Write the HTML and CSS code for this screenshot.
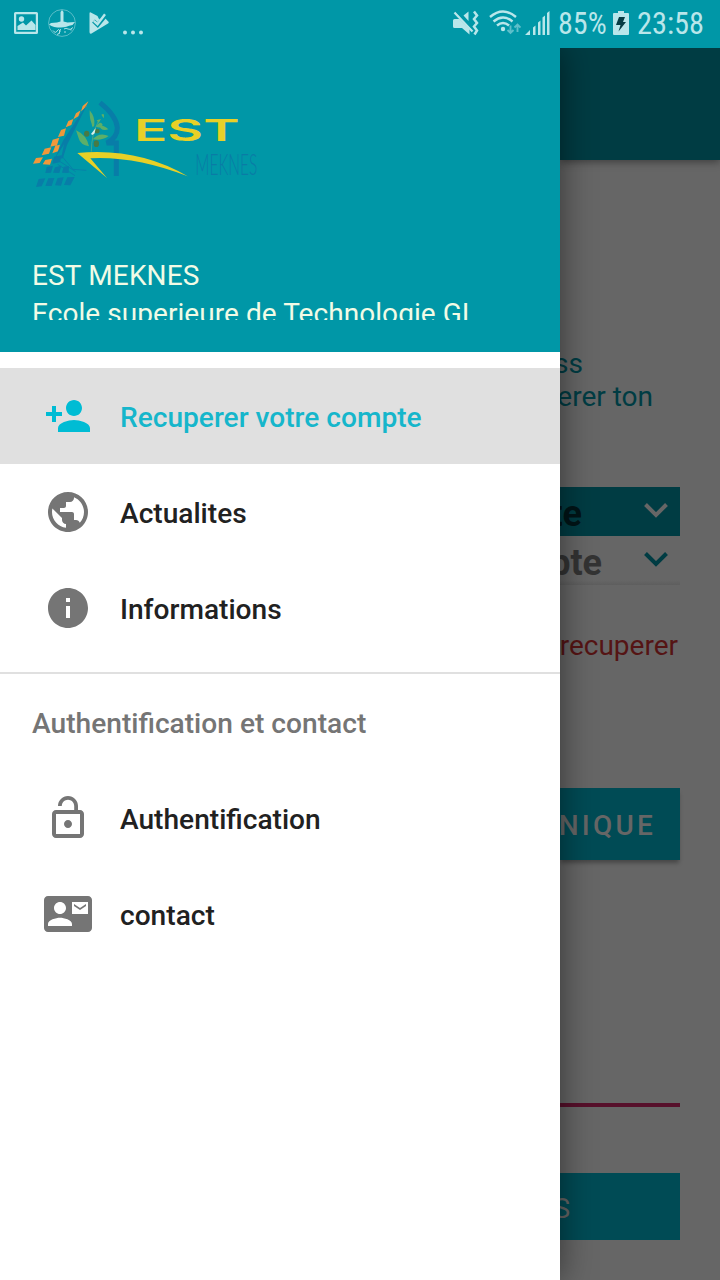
FILE: index.html
```html
<!DOCTYPE html>
<html lang="fr">
<head>
<meta charset="utf-8">
<title>EST Meknes</title>
<link rel="stylesheet" href="styles.css">
</head>
<body>
<header class="status">
  <div class="status-left">
    <svg class="ic-photo" width="24" height="22" viewBox="0 0 24 22"><path fill-rule="evenodd" d="M1.500 0h21a1.500 1.500 0 0 1 1.500 1.500v19a1.500 1.500 0 0 1-1.500 1.500h-21A1.500 1.500 0 0 1 0 20.500v-19A1.500 1.500 0 0 1 1.500 0zM2.200 2.200v17.600h19.600V2.200z"/><circle cx="7.500" cy="7" r="2.700"/><path d="M3.500 18v-4L9 10.500l3 3L17.500 8.500l4 4.500v5z"/></svg>
    <svg class="ic-mosque" width="28" height="28" viewBox="0 0 28 28"><circle cx="14" cy="14" r="13.400" fill="none" stroke="#b9e6ea" stroke-width=".8" opacity=".6"/><path d="M12.500 12.500V3l1.500-2 1.500 2v9.500l4 1 7.500-.5-2.500 3c-5 1-7.500 2.500-11.500 2.500-5 0-9-.5-12-3l2-1.500 6-.5z"/><path d="M5 21.500q2.500 3.500 4 .5t3 0q-.5 3.500-3 3.500M11 25l1.500-5M16 20q2-1.500 4 0t5-1.500M16 23h2M23 20v1.500" fill="none" stroke="#b9e6ea" stroke-width=".9"/></svg>
    <svg class="ic-play" width="20" height="22" viewBox="0 0 20 22"><path d="M1.800.400L8.500 4 10 7l6-1 3 3.200q1.500 1.200 0 2.300L2.500 21.500Q.500 22.300.500 20V1.500Q.500 0 1.800.400z"/><path d="M4.500 9l4.200 4L17 3" fill="none" stroke="#0097a7" stroke-width="4"/><path d="M4.800 8.800l3.700 3.400L16 2.300" fill="none" stroke="#b9e6ea" stroke-width="2.400"/></svg>
    <svg class="ic-dots" width="22" height="5" viewBox="0 0 22 5"><circle cx="3" cy="2.500" r="2"/><circle cx="11" cy="2.500" r="2"/><circle cx="19" cy="2.500" r="2"/></svg>
  </div>
  <div class="status-right">
    <svg class="ic-mute" width="27" height="26" viewBox="0 0 27 26"><path d="M1.500 9h5l10 10v5.500L9 18H1.500Q0 18 0 16.500v-6Q0 9 1.500 9zM10.500 5.500l5-4v9.500z"/><path d="M1.500 2.500l18 19" fill="none" stroke="#b9e6ea" stroke-width="2.300"/><path d="M4 2l15 16" fill="none" stroke="#0097a7" stroke-width="1.300"/><path d="M21 1.500l3 4-3 3.500 3 4-3 3.500 3 4-2.500 4" fill="none" stroke="#b9e6ea" stroke-width="2.500"/></svg>
    <svg class="ic-wifi" width="32" height="26" viewBox="0 0 32 26"><g fill="none" stroke="#b9e6ea" stroke-width="2.400"><path d="M1 7q13-11 26 0M4.500 11.500q9.500-8 19 0M8 15.500q6-5 12 0"/></g><circle cx="14" cy="19" r="2.200"/><path d="M21.500 15.500v7M18.500 20l3 3 3-3M28.500 22v-7M25.500 17.500l3-3 3 3" fill="none" stroke="#5dbfca" stroke-width="1.900"/></svg>
    <svg class="ic-signal" width="25" height="26" viewBox="0 0 25 26"><path d="M0 25l5-5v5zM8 17.500l2.500-2V25H8zM13 12.500l2.500-2V25H13zM17.500 7.500l2.500-2V25h-2.500zM22 3l2.500-2v24H22z"/></svg>
    <span class="status-text battery-text">85%</span>
    <svg class="ic-battery" width="16" height="24" viewBox="0 0 16 24"><path d="M5 0h6v2h4q1 0 1 1v20q0 1-1 1H1q-1 0-1-1V3q0-1 1-1h4z"/><path d="M6 6h6l-2 5h3L5.500 20.500 7.500 14H3z" fill="#063c43"/></svg>
    <span class="status-text time-text">23:58</span>
  </div>
</header>
<div class="screen">
  <nav class="drawer">
    <div class="account">
      <svg class="logo" width="236" height="110" viewBox="36 0 708 330">
        <g fill="#f0983a">
          <path d="M188 48l17-14-7 18-15 12zM168 70l14-9-7 18-15 9zM145 93l15-6-6 18-17 7zM123 120l15-5-6 22-18 4zM98 149l20-6-7 23-20 4zM74 176l20-4-7 19-22 5zM106 167l14-3-6 20-17 6zM48 204l21-2-10 17-20 2zM76 210l20-4-6 18-22-1z"/>
        </g>
        <g fill="#087da8">
          <path d="M130 151l75-114-64 128-12 39-6 2 9-43-30 47zM102 200l23-4-5 21-23 4zM80 231l19-4-6 21-17 1zM105 232l19-5-6 22-19-1zM131 230l16-2-1 21-20-1zM56 267l20-2-11 24-17 2zM85 265l18-1-8 24-19 0zM113 264l18-2-8 25-18-1zM142 262l22-1-13 25-19-1z"/>
        </g>
        <path d="M125 198l34 40 40 3M119 214l48 31M113 223l52 34" fill="none" stroke="#087da8" stroke-width="2.500"/>
        <g fill="#5caf69"><path d="M209 61q17 20 14 45-6 13-8-5-7-15-6-40zM168 121q32 14 39 48-26-4-31-24zM218 148q20-23 48-10-21 15-48 10zM228 110q13-20 20-6-5 13-20 6zM244 74q11-7 7 11zM236 105q17 1 29 13-22 7-29-13zM230 91l13-4-7 12z"/></g>
        <path d="M214 185q0-50 20-89" fill="none" stroke="#6bad75" stroke-width="2"/>
        <g fill="#487a45"><ellipse cx="200" cy="131" rx="8" ry="9"/><ellipse cx="231" cy="123" rx="8" ry="7"/><ellipse cx="229" cy="161" rx="8" ry="10"/></g>
        <path d="M213 132l14-18-3 16-7 5z" fill="#d8f0ec"/>
        <path d="M240 38q49 39 52 75 0 31-32 46h29v99" fill="none" stroke="#087da8" stroke-width="15"/>
        <path d="M172 189Q355 172 503 259 345 198 211 205l50 59z" fill="#e8d027"/>
        <text class="wordmark" x="0" y="0" transform="translate(342 153) scale(1.500 1)" textLength="211" lengthAdjust="spacingAndGlyphs">EST</text>
        <text class="city" x="526" y="256" textLength="186" lengthAdjust="spacingAndGlyphs">MEKNES</text>
      </svg>
      <div class="account-name">EST MEKNES</div>
      <div class="account-detail">Ecole superieure de Technologie GI</div>
    </div>
    <div class="menu">
      <a class="item selected"><svg class="icon" viewBox="0 0 24 24"><path d="M15 12c2.210 0 4-1.790 4-4s-1.790-4-4-4-4 1.790-4 4 1.790 4 4 4zm-9-2V7H4v3H1v2h3v3h2v-3h3v-2H6zm9 4c-2.670 0-8 1.340-8 4v2h16v-2c0-2.660-5.330-4-8-4z"/></svg><span>Recuperer votre compte</span></a>
      <a class="item"><svg class="icon" viewBox="0 0 24 24"><path d="M12 2C6.480 2 2 6.480 2 12s4.480 10 10 10 10-4.480 10-10S17.520 2 12 2zm-1 17.930c-3.950-.490-7-3.850-7-7.930 0-.620.080-1.210.210-1.790L9 15v1c0 1.100.900 2 2 2v1.930zm6.900-2.540c-.260-.810-1-1.390-1.900-1.390h-1v-3c0-.550-.450-1-1-1H8v-2h2c.550 0 1-.450 1-1V7h2c1.100 0 2-.900 2-2v-.410c2.930 1.190 5 4.060 5 7.410 0 2.080-.800 3.970-2.100 5.390z"/></svg><span>Actualites</span></a>
      <a class="item"><svg class="icon" viewBox="0 0 24 24"><path d="M12 2C6.480 2 2 6.480 2 12s4.480 10 10 10 10-4.480 10-10S17.520 2 12 2zm1 15h-2v-6h2v6zm0-8h-2V7h2v2z"/></svg><span>Informations</span></a>
    </div>
    <div class="menu second">
      <h2 class="section-title">Authentification et contact</h2>
      <a class="item"><svg class="icon" viewBox="0 0 24 24"><path d="M12 17c1.100 0 2-.900 2-2s-.900-2-2-2-2 .900-2 2 .900 2 2 2zm6-9h-1V6c0-2.760-2.240-5-5-5S7 3.240 7 6h1.900c0-1.710 1.390-3.100 3.100-3.100s3.100 1.390 3.100 3.100v2H6c-1.100 0-2 .900-2 2v10c0 1.100.900 2 2 2h12c1.100 0 2-.900 2-2V10c0-1.100-.900-2-2-2zm0 12H6V10h12v10z"/></svg><span>Authentification</span></a>
      <a class="item"><svg class="icon" viewBox="0 0 24 24"><path fill-rule="evenodd" d="M22 3H2C.900 3 0 3.900 0 5v14c0 1.100.900 2 2 2h20c1.100 0 2-.900 2-2V5c0-1.100-.900-2-2-2zM8 6c1.660 0 3 1.340 3 3s-1.340 3-3 3-3-1.340-3-3 1.340-3 3-3zm6 12H2v-1c0-2 4-3.100 6-3.100s6 1.100 6 3.100v1zm8-6h-8V6h8v6zm-1-4V7l-3 2-3-2v1l3 2 3-2z"/></svg><span>contact</span></a>
    </div>
  </nav>
  <main class="page">
    <div class="appbar"></div>
    <div class="intro"><span class="intro-first">ss</span><span>erer ton</span></div>
    <div class="tabs">
      <div class="tab active"><span>te</span><svg width="24" height="15" viewBox="0 0 24 15"><path d="M1.500 1.500L12 12 22.500 1.500"/></svg></div>
      <div class="tab"><span>pte</span><svg width="24" height="15" viewBox="0 0 24 15"><path d="M1.500 1.500L12 12 22.500 1.500"/></svg></div>
    </div>
    <div class="notice">recuperer</div>
    <div class="button unique"><span>NIQUE</span></div>
    <div class="underline"></div>
    <div class="button access"><span>S</span></div>
  </main>
</div>
</body>
</html>
```
FILE: styles.css
```css
* { box-sizing: border-box; }
body { margin: 0; width: 720px; height: 1280px; overflow: hidden; font-family: Roboto, sans-serif; font-size: 28px; line-height: 33px; background: #666; display: flex; flex-direction: column; }
svg { display: block; flex: none; }

.status { height: 48px; flex: none; background: #0097a7; display: flex; justify-content: space-between; align-items: flex-start; fill: #b9e6ea; color: #b9e6ea; }
.status-left, .status-right { display: flex; align-items: flex-start; }
.ic-photo { margin: 12px 0 0 14px; }
.ic-mosque { margin: 9px 0 0 10px; }
.ic-play { margin: 12px 0 0 13px; }
.ic-dots { margin: 30px 0 0 13px; }
.ic-mute { margin-top: 10px; }
.ic-wifi { margin: 10px 0 0 9px; }
.ic-signal { margin: 10px 0 0 4px; }
.ic-battery { margin: 11px 0 0 6px; }
.status-text { font-family: "Roboto Condensed", Roboto, sans-serif; font-size: 31px; line-height: 36px; margin-top: 6px; white-space: nowrap; transform-origin: left; }
.battery-text { width: 49px; margin-left: 8px; transform: scaleX(.97); }
.time-text { width: 67px; margin: 6px 16px 0 8px; transform: scaleX(.98); }

.screen { flex: 1; min-height: 0; display: flex; }
.drawer { width: 560px; flex: none; background: #fff; box-shadow: 0 0 32px rgba(0, 0, 0, .5); z-index: 1; clip-path: inset(0 -40px 0 0); }
.account { height: 304px; background: #0097a7; color: #f1fbe6; padding: 42px 32px 32px; display: flex; flex-direction: column; letter-spacing: .06px; }
.wordmark { font-family: Inter, sans-serif; font-size: 90px; font-weight: 600; fill: #e8d027; letter-spacing: 0; }
.city { font-family: Lato, sans-serif; font-weight: 300; font-size: 91px; fill: #0a7ba6; letter-spacing: 0; }
.account-name { margin-top: 59px; letter-spacing: .15px; }
.account-detail { margin-top: 5px; height: 23px; overflow: hidden; white-space: nowrap; }
.menu { padding-top: 16px; }
.item { height: 96px; display: flex; align-items: center; gap: 28px; padding: 0 32px 0 44px; font-size: 28.120px; font-weight: 500; color: #212121; }
.item span { padding-top: 3px; }
.icon { width: 48px; height: 48px; fill: #757575; }
.selected { background: #e0e0e0; color: #16b6cb; }
.selected .icon { fill: #00bcd4; }
.second { border-top: 2px solid #e0e0e0; margin-top: 16px; padding-top: 0; }
.section-title { margin: 0; padding: 33px 32px 30px; font-size: 28.150px; line-height: 33px; font-weight: 500; color: #757575; }

.page { flex: 1; min-width: 0; overflow: hidden; background: #666; display: flex; flex-direction: column; }
.appbar { height: 112px; flex: none; background: #003c43; box-shadow: 0 2px 8px rgba(0, 0, 0, .4); }
.intro { margin-top: 187px; padding-right: 67px; display: flex; flex-direction: column; align-items: flex-end; color: #003c43; white-space: nowrap; }
.intro-first { margin-right: 70px; }
.tabs { margin: 74px 40px 0 0; box-shadow: 0 -1px 0 rgba(0, 0, 0, .12) inset; }
.tab { height: 49px; padding-right: 12px; display: flex; justify-content: flex-end; font-size: 36px; line-height: 42px; font-weight: 700; color: #333; }
.tab:last-child { background: linear-gradient(#666 90%, #5e5e5e); }
.tab span { padding-top: 6px; margin-right: 42px; }
.tab svg { margin-top: 16px; fill: none; stroke: #003c43; stroke-width: 4; }
.tab.active { background: #003c43; color: #001417; }
.tab.active span { margin-right: 62px; }
.tab.active svg { stroke: #666; }
.notice { margin: 44px 42px 0 0; display: flex; justify-content: flex-end; color: #551414; }
.button { margin-right: 40px; background: #004b55; color: #666; display: flex; align-items: center; justify-content: flex-end; font-weight: 500; }
.unique { height: 72px; margin-top: 126px; padding-right: 24px; padding-top: 3px; letter-spacing: 3.200px; box-shadow: 0 4px 4px -1px rgba(0, 0, 0, .3); }
.underline { height: 4px; margin: 243px 40px 0 0; background: #57102b; }
.access { height: 67px; margin-top: 66px; padding-right: 110px; padding-top: 3px; font-weight: 400; }
```
